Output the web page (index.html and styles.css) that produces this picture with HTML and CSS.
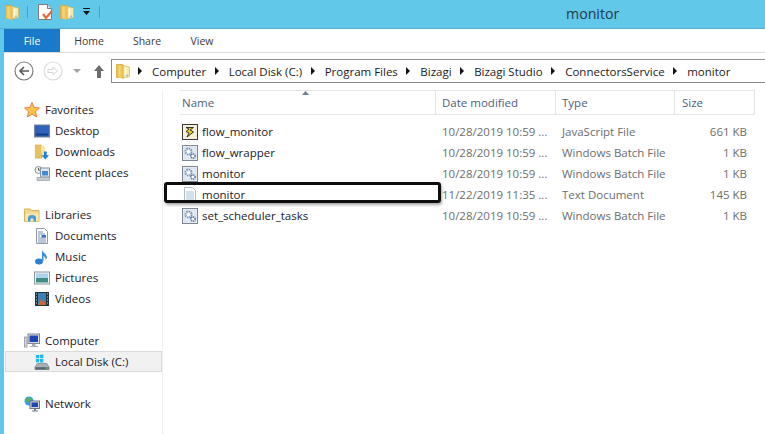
FILE: index.html
```html
<!DOCTYPE html>
<html lang="en">
<head>
<meta charset="utf-8">
<title>monitor</title>
<link rel="stylesheet" href="styles.css">
</head>
<body>
<svg class="defs" width="0" height="0" aria-hidden="true">
  <defs>
    <linearGradient id="fold" x1="0" y1="0" x2="1" y2="0"><stop offset="0" stop-color="#f6dc7c"/><stop offset="1" stop-color="#e5b94d"/></linearGradient>
    <symbol id="folder" viewBox="0 0 14 16">
      <path d="M.5 1.500h6l1 1.500v11.500H.5z" fill="#e8bf55" stroke="#d8a63a" stroke-width=".8"/>
      <path d="M7 2.500l6.500 1.500v9.500L7 15z" fill="#f7e9ae" stroke="#d9b458" stroke-width=".7"/>
      <path d="M2.500 2.500h5V16l-5-1.500z" fill="url(#fold)"/>
      <path d="M9.500 5v7" stroke="#fff" stroke-width="1.300" opacity=".8"/>
      <path d="M11 11.500v2" stroke="#5aa0d8" stroke-width="1"/>
    </symbol>
    <symbol id="bat" viewBox="0 0 16 16">
      <rect x=".5" y=".5" width="15" height="15" fill="#f1f4f8" stroke="#7d8794"/>
      <rect x="2" y="2" width="12" height="12" fill="#e3ebf4" stroke="#c3cedb" stroke-width=".5"/>
      <circle cx="6.500" cy="6.500" r="3.100" fill="none" stroke="#7c96b8" stroke-width="1.900" stroke-dasharray="1.500 .9"/>
      <circle cx="6.500" cy="6.500" r="1.500" fill="#fff"/>
      <circle cx="11" cy="11" r="2.100" fill="#fff" stroke="#47699a" stroke-width="1.400" stroke-dasharray="1.200 .6"/>
    </symbol>
  </defs>
</svg>

<div class="window">
  <header class="titlebar">
    <div class="qat">
      <svg class="i16-18"><use href="#folder"/></svg>
      <span class="qat-sep"></span>
      <svg class="qat-doc" viewBox="0 0 15 16" width="15" height="16"><path d="M.5.500h9l4 4v11H.5z" fill="#fff" stroke="#7b7b7b"/><path d="M9.500.500v4h4" fill="#ddd" stroke="#7b7b7b"/><path d="M5 10l3 4 6-7" fill="none" stroke="#e8693d" stroke-width="2.300"/></svg>
      <svg class="i16-18"><use href="#folder"/></svg>
      <svg class="qat-drop" viewBox="0 0 9 8" width="9" height="8"><path d="M1 0h7v1H1zM1 3h7L4.500 7z" fill="#111"/></svg>
      <span class="qat-sep qat-sep-2"></span>
    </div>
    <div class="title">monitor</div>
  </header>

  <div class="shell">
    <nav class="tabs">
      <span class="tab tab-file">File</span>
      <span class="tab tab-home">Home</span>
      <span class="tab tab-share">Share</span>
      <span class="tab tab-view">View</span>
    </nav>

    <div class="navbar">
      <svg class="nav-btn" viewBox="0 0 20 20" width="20" height="20"><circle cx="10" cy="10" r="9" fill="#fff" stroke="#7d7d7d" stroke-width="1.200"/><path d="M15 10H6M10 6l-4 4 4 4" fill="none" stroke="#5a5a5a" stroke-width="1.700"/></svg>
      <svg class="nav-btn nav-fwd" viewBox="0 0 20 20" width="20" height="20"><circle cx="10" cy="10" r="9" fill="#fff" stroke="#dcdcdc" stroke-width="1.200"/><path d="M5 8.500h5V6l4.500 4-4.500 4v-2.500H5z" fill="none" stroke="#d5d5d5"/></svg>
      <svg class="nav-caret" viewBox="0 0 8 4" width="8" height="4"><path d="M0 0h8L4 4z" fill="#a3a3a3"/></svg>
      <svg class="nav-up" viewBox="0 0 10 13" width="10" height="13"><path d="M5 0l5 6H7v7H3V6H0z" fill="#6d6d6d"/></svg>
      <div class="address">
        <svg class="i16-18"><use href="#folder"/></svg>
        <span class="crumb">Computer</span>
        <span class="crumb">Local Disk (C:)</span>
        <span class="crumb">Program Files</span>
        <span class="crumb">Bizagi</span>
        <span class="crumb">Bizagi Studio</span>
        <span class="crumb">ConnectorsService</span>
        <span class="crumb">monitor</span>
      </div>
    </div>

    <div class="content">
      <aside class="sidebar">
        <div class="group">
          <div class="side-row top"><svg class="ic" viewBox="0 0 16 16"><path d="M8 .5l2.200 5 5.300.5-4 3.600 1.200 5.400L8 12.200 3.300 15l1.200-5.400-4-3.600 5.300-.5z" fill="#fbc24a" stroke="#e8814a"/></svg><span>Favorites</span></div>
          <div class="side-row"><svg class="ic" viewBox="0 0 16 14"><rect x=".5" y="1" width="15" height="12" fill="#2f62b8" stroke="#77849a"/><rect x="2" y="9.500" width="12" height="2" fill="#173c86"/></svg><span>Desktop</span></div>
          <div class="side-row"><svg class="ic" viewBox="0 0 16 17"><path d="M1 1h6l1 2v12H1z" fill="#e7c25e" stroke="#d9a93f" stroke-width=".7"/><path d="M7 2l4 1v7H7z" fill="#f5e3a2"/><path d="M10 8h3v4h2.500l-4 4.500-4-4.500H10z" fill="#1f7fd6"/></svg><span>Downloads</span></div>
          <div class="side-row"><svg class="ic" viewBox="0 0 16 16"><circle cx="4.500" cy="5" r="3.500" fill="#eef0f2" stroke="#8a949e"/><path d="M4.500 3v2.200h2" fill="none" stroke="#555"/><rect x="6.500" y="3" width="9" height="9" fill="#dfe6ee" stroke="#8693a0"/><rect x="8" y="6" width="6" height="4.500" fill="#3e8ccf"/><rect x="3" y="12.500" width="12.500" height="3" fill="#c6ccd3" stroke="#8c949c" stroke-width=".6"/></svg><span>Recent places</span></div>
        </div>
        <div class="group">
          <div class="side-row top"><svg class="ic" viewBox="0 0 16 15"><path d="M.5 3V1.500h6l1 1.500h7.500v11H.5z" fill="#f0d891" stroke="#d6b25a"/><path d="M1.500 14V6h13v8z" fill="#f5e6b4"/><path d="M4 14v-3.500a4 3 0 0 1 8 0V14h-2.500v-3h-3v3z" fill="#4c9bd6"/></svg><span>Libraries</span></div>
          <div class="side-row"><svg class="ic" viewBox="0 0 16 16"><path d="M2.500.5h8l3 3v12h-11z" fill="#fff" stroke="#8f9aa6"/><path d="M4 4h5M4 6h7M4 8h2M4 10h8M4 12h8M4 14h8" stroke="#7d8fb5"/><rect x="7.500" y="7" width="4.500" height="2.500" fill="#3b72b8"/></svg><span>Documents</span></div>
          <div class="side-row"><svg class="ic" viewBox="0 0 16 16"><ellipse cx="5" cy="12.500" rx="4" ry="3" fill="#2f7fd0"/><path d="M8 12V1c1 3 5 4 5 8l-1.500 2c.5-2-1-3.500-2-4v5z" fill="#3b8fdc"/></svg><span>Music</span></div>
          <div class="side-row"><svg class="ic" viewBox="0 0 16 14"><rect x=".5" y="1" width="15" height="12" fill="#f3f5f7" stroke="#8d949c"/><rect x="2" y="2.500" width="12" height="4.500" fill="#a9d2ee"/><rect x="2" y="7" width="12" height="4.500" fill="#3f8b86"/></svg><span>Pictures</span></div>
          <div class="side-row"><svg class="ic" viewBox="0 0 16 16"><rect x="1" y="1" width="14" height="14" fill="#22333a"/><rect x="4" y="2" width="8" height="12" fill="#3f7fb6"/><path d="M4 14l3-6 2 3 1-2 2 5z" fill="#c8683a"/><path d="M2 3h1M2 6h1M2 9h1M2 12h1M13 3h1M13 6h1M13 9h1M13 12h1" stroke="#b9d4d4"/></svg><span>Videos</span></div>
        </div>
        <div class="group">
          <div class="side-row top"><svg class="ic" viewBox="0 0 16 16"><rect x=".5" y="4" width="2.500" height="10" fill="#d5d8dc" stroke="#858b92" stroke-width=".7"/><rect x="4" y="1" width="11.500" height="9.500" fill="#d9dee4" stroke="#7e8691"/><rect x="5.500" y="2.500" width="8.500" height="6.500" fill="#1d45b5"/><path d="M8 11h3.500v2H14v1H6v-1h2z" fill="#a9afb6"/></svg><span>Computer</span></div>
          <div class="side-row selected"><svg class="ic" viewBox="0 0 16 17"><path d="M1.500 1h3.500v3.500H1.500zM5.800 .5h3.700v4H5.800zM1.500 5.200h3.500v3.500H1.500zM5.800 5.200h3.700v3.700H5.800z" fill="#22bdf0"/><path d="M3 10h10l2.500 4v2.500H.5V14z" fill="#a8b0b4" stroke="#6f7a80" stroke-width=".7"/><rect x="1" y="14" width="14" height="2.500" fill="#56686f"/><rect x="12" y="14.500" width="2" height="1" fill="#7fe07f"/></svg><span>Local Disk (C:)</span></div>
        </div>
        <div class="group">
          <div class="side-row top"><svg class="ic" viewBox="0 0 16 16"><circle cx="5" cy="5" r="4.500" fill="#3f9fd8"/><path d="M2 3c2-2 4-1 5 0L5 6 3 6z" fill="#59b548"/><rect x="6" y="5" width="9.500" height="7.500" fill="#cfd5dc" stroke="#6d7681"/><rect x="7.500" y="6.500" width="6.500" height="4.500" fill="#1d45b5"/><path d="M10 13h2v1.500h2v1H8v-1h2z" fill="#7b8189"/></svg><span>Network</span></div>
        </div>
      </aside>

      <main class="files">
        <div class="sort-mark"><svg viewBox="0 0 7 4" width="7" height="4"><path d="M3.500 0L7 4H0z" fill="#6f7d8c"/></svg></div>
        <div class="row head">
          <span class="col-name">Name</span>
          <span class="col-date">Date modified</span>
          <span class="col-type">Type</span>
          <span class="col-size">Size</span>
        </div>
        <div class="rows">
          <div class="row">
            <span class="col-name"><svg class="ic ic-file" viewBox="0 0 16 16"><rect x=".5" y=".5" width="15" height="15" fill="#f4f1d8" stroke="#3b3b3b"/><path d="M4 3.500h7.500L8 6l3.500 2L5 13l2-4-3-1.500 3-2.500z" fill="#e7d31f" stroke="#222" stroke-width=".9"/></svg>flow_monitor</span>
            <span class="col-date">10/28/2019 10:59 ...</span><span class="col-type">JavaScript File</span><span class="col-size">661 KB</span>
          </div>
          <div class="row">
            <span class="col-name"><svg class="ic ic-file"><use href="#bat"/></svg>flow_wrapper</span>
            <span class="col-date">10/28/2019 10:59 ...</span><span class="col-type">Windows Batch File</span><span class="col-size">1 KB</span>
          </div>
          <div class="row">
            <span class="col-name"><svg class="ic ic-file"><use href="#bat"/></svg>monitor</span>
            <span class="col-date">10/28/2019 10:59 ...</span><span class="col-type">Windows Batch File</span><span class="col-size">1 KB</span>
          </div>
          <div class="row">
            <span class="col-name"><svg class="ic ic-file" viewBox="0 0 16 16"><path d="M2.500.5h8l3 3v12h-11z" fill="#fff" stroke="#b4b9bf"/><path d="M4 5h8M4 7h8M4 9h8M4 11h8M4 13h8" stroke="#a9c0d8"/></svg>monitor</span>
            <span class="col-date">11/22/2019 11:35 ...</span><span class="col-type">Text Document</span><span class="col-size">145 KB</span>
          </div>
          <div class="row">
            <span class="col-name"><svg class="ic ic-file"><use href="#bat"/></svg>set_scheduler_tasks</span>
            <span class="col-date">10/28/2019 10:59 ...</span><span class="col-type">Windows Batch File</span><span class="col-size">1 KB</span>
          </div>
        </div>
      </main>
    </div>
  </div>
  <div class="callout"></div>
</div>
</body>
</html>
```

FILE: styles.css
```css
* { box-sizing: border-box; }
html, body { margin: 0; padding: 0; }
body { width: 765px; height: 434px; overflow: hidden; background: #62c8ea; font-family: "Open Sans", "Noto Sans", sans-serif; font-size: 11.5px; color: #1a1a2a; }
.defs { position: absolute; }
.window { position: relative; width: 765px; height: 434px; display: flex; flex-direction: column; }

.titlebar { height: 29px; flex: none; display: flex; align-items: center; position: relative; border-bottom: 1px solid #57aecb; }
.qat { display: flex; align-items: center; padding-left: 5px; height: 28px; padding-bottom: 4px; }
.i16-18 { width: 14px; height: 16px; flex: none; }
.qat-sep { width: 1px; height: 12px; background: #6a93a8; margin-left: 8px; margin-right: 10px; }
.qat-doc { margin-right: 7px; }
.qat-drop { margin-left: 8px; }
.qat-sep-2 { margin-left: 8px; }
.title { position: absolute; left: 566px; top: 3px; font-size: 14.2px; line-height: 21px; color: #1f3a48; }

.shell { margin-left: 4px; flex: 1; background: #fff; display: flex; flex-direction: column; min-height: 0; }
.tabs { height: 24px; flex: none; display: flex; align-items: stretch; border-bottom: 1px solid #dcdcdc; font-size: 10.5px; color: #3b3b3b; }
.tab { display: flex; align-items: center; justify-content: center; padding-top: 1px; }
.tab-file { width: 56px; background: #1979ca; color: #fff; }
.tab-home { width: 58px; }
.tab-share { width: 58px; }
.tab-view { width: 52px; }

.navbar { height: 37px; flex: none; display: flex; align-items: center; padding-bottom: 1px; }
.nav-btn { flex: none; margin-left: 10px; }
.nav-fwd { margin-left: 9px; }
.nav-caret { margin-left: 10px; flex: none; }
.nav-up { margin-left: 13px; flex: none; }
.address { margin-left: 7px; flex: 1; height: 24px; border: 1px solid #8c8c8c; border-right: 0; display: flex; align-items: center; padding-left: 4px; white-space: nowrap; font-size: 11.5px; color: #1a1a1a; }
.crumb { display: flex; align-items: center; }
.crumb::before { content: ""; border-left: 4px solid #111; border-top: 4px solid transparent; border-bottom: 4px solid transparent; margin: 0 10px 0 8.5px; }
.crumb:first-of-type::before { margin-left: 8px; }

.content { flex: 1; display: flex; min-height: 0; }
.sidebar { width: 159px; flex: none; padding-top: 9px; border-right: 1px solid #f0f0f0; display: flex; flex-direction: column; gap: 21px; }
.side-row { height: 21px; display: flex; align-items: center; padding-left: 30px; margin-right: 2px; gap: 5px; }
.side-row.top { padding-left: 20px; }
.side-row.selected { background: #f1f1f1; outline: 1px solid #dadada; outline-offset: -1px; margin-left: 1px; margin-right: 0; padding-left: 29px; }
.ic { width: 16px; height: 16px; flex: none; }

.files { flex: 1; min-width: 0; position: relative; }
.sort-mark { position: absolute; left: 139px; top: 1px; height: 4px; line-height: 0; }
.row { display: flex; height: 21px; align-items: center; padding-left: 19px; color: #6d6d6d; }
.head { height: 25px; margin-left: 17px; padding-left: 0; border-top: 1px solid #e6e6e6; border-bottom: 1px solid #e6e6e6; margin-right: 10px; color: #4c607a; }
.head span { height: 100%; display: flex; align-items: center; border-right: 1px solid #e4e4e4; }
.rows { padding-top: 6px; }
.col-name { width: 254px; flex: none; display: flex; align-items: center; gap: 4px; color: #1a1a2a; }
.col-date { width: 120px; flex: none; padding-left: 6px; }
.col-type { width: 119px; flex: none; padding-left: 6px; }
.col-size { width: 80px; flex: none; text-align: right; padding-right: 8px; }
.head .col-name { width: 256px; padding-left: 2px; color: #4c607a; }
.head .col-date { width: 120px; }
.head .col-type { width: 119px; }
.head .col-size { width: 80px; justify-content: flex-start; padding-left: 7px; }
.ic-file { margin-left: 0; }

.callout { position: absolute; left: 164px; top: 182px; width: 277px; height: 21px; border: 3px solid #0d0d0d; border-radius: 3px; box-shadow: 1px 2px 3px rgba(0,0,0,.35); }
```
